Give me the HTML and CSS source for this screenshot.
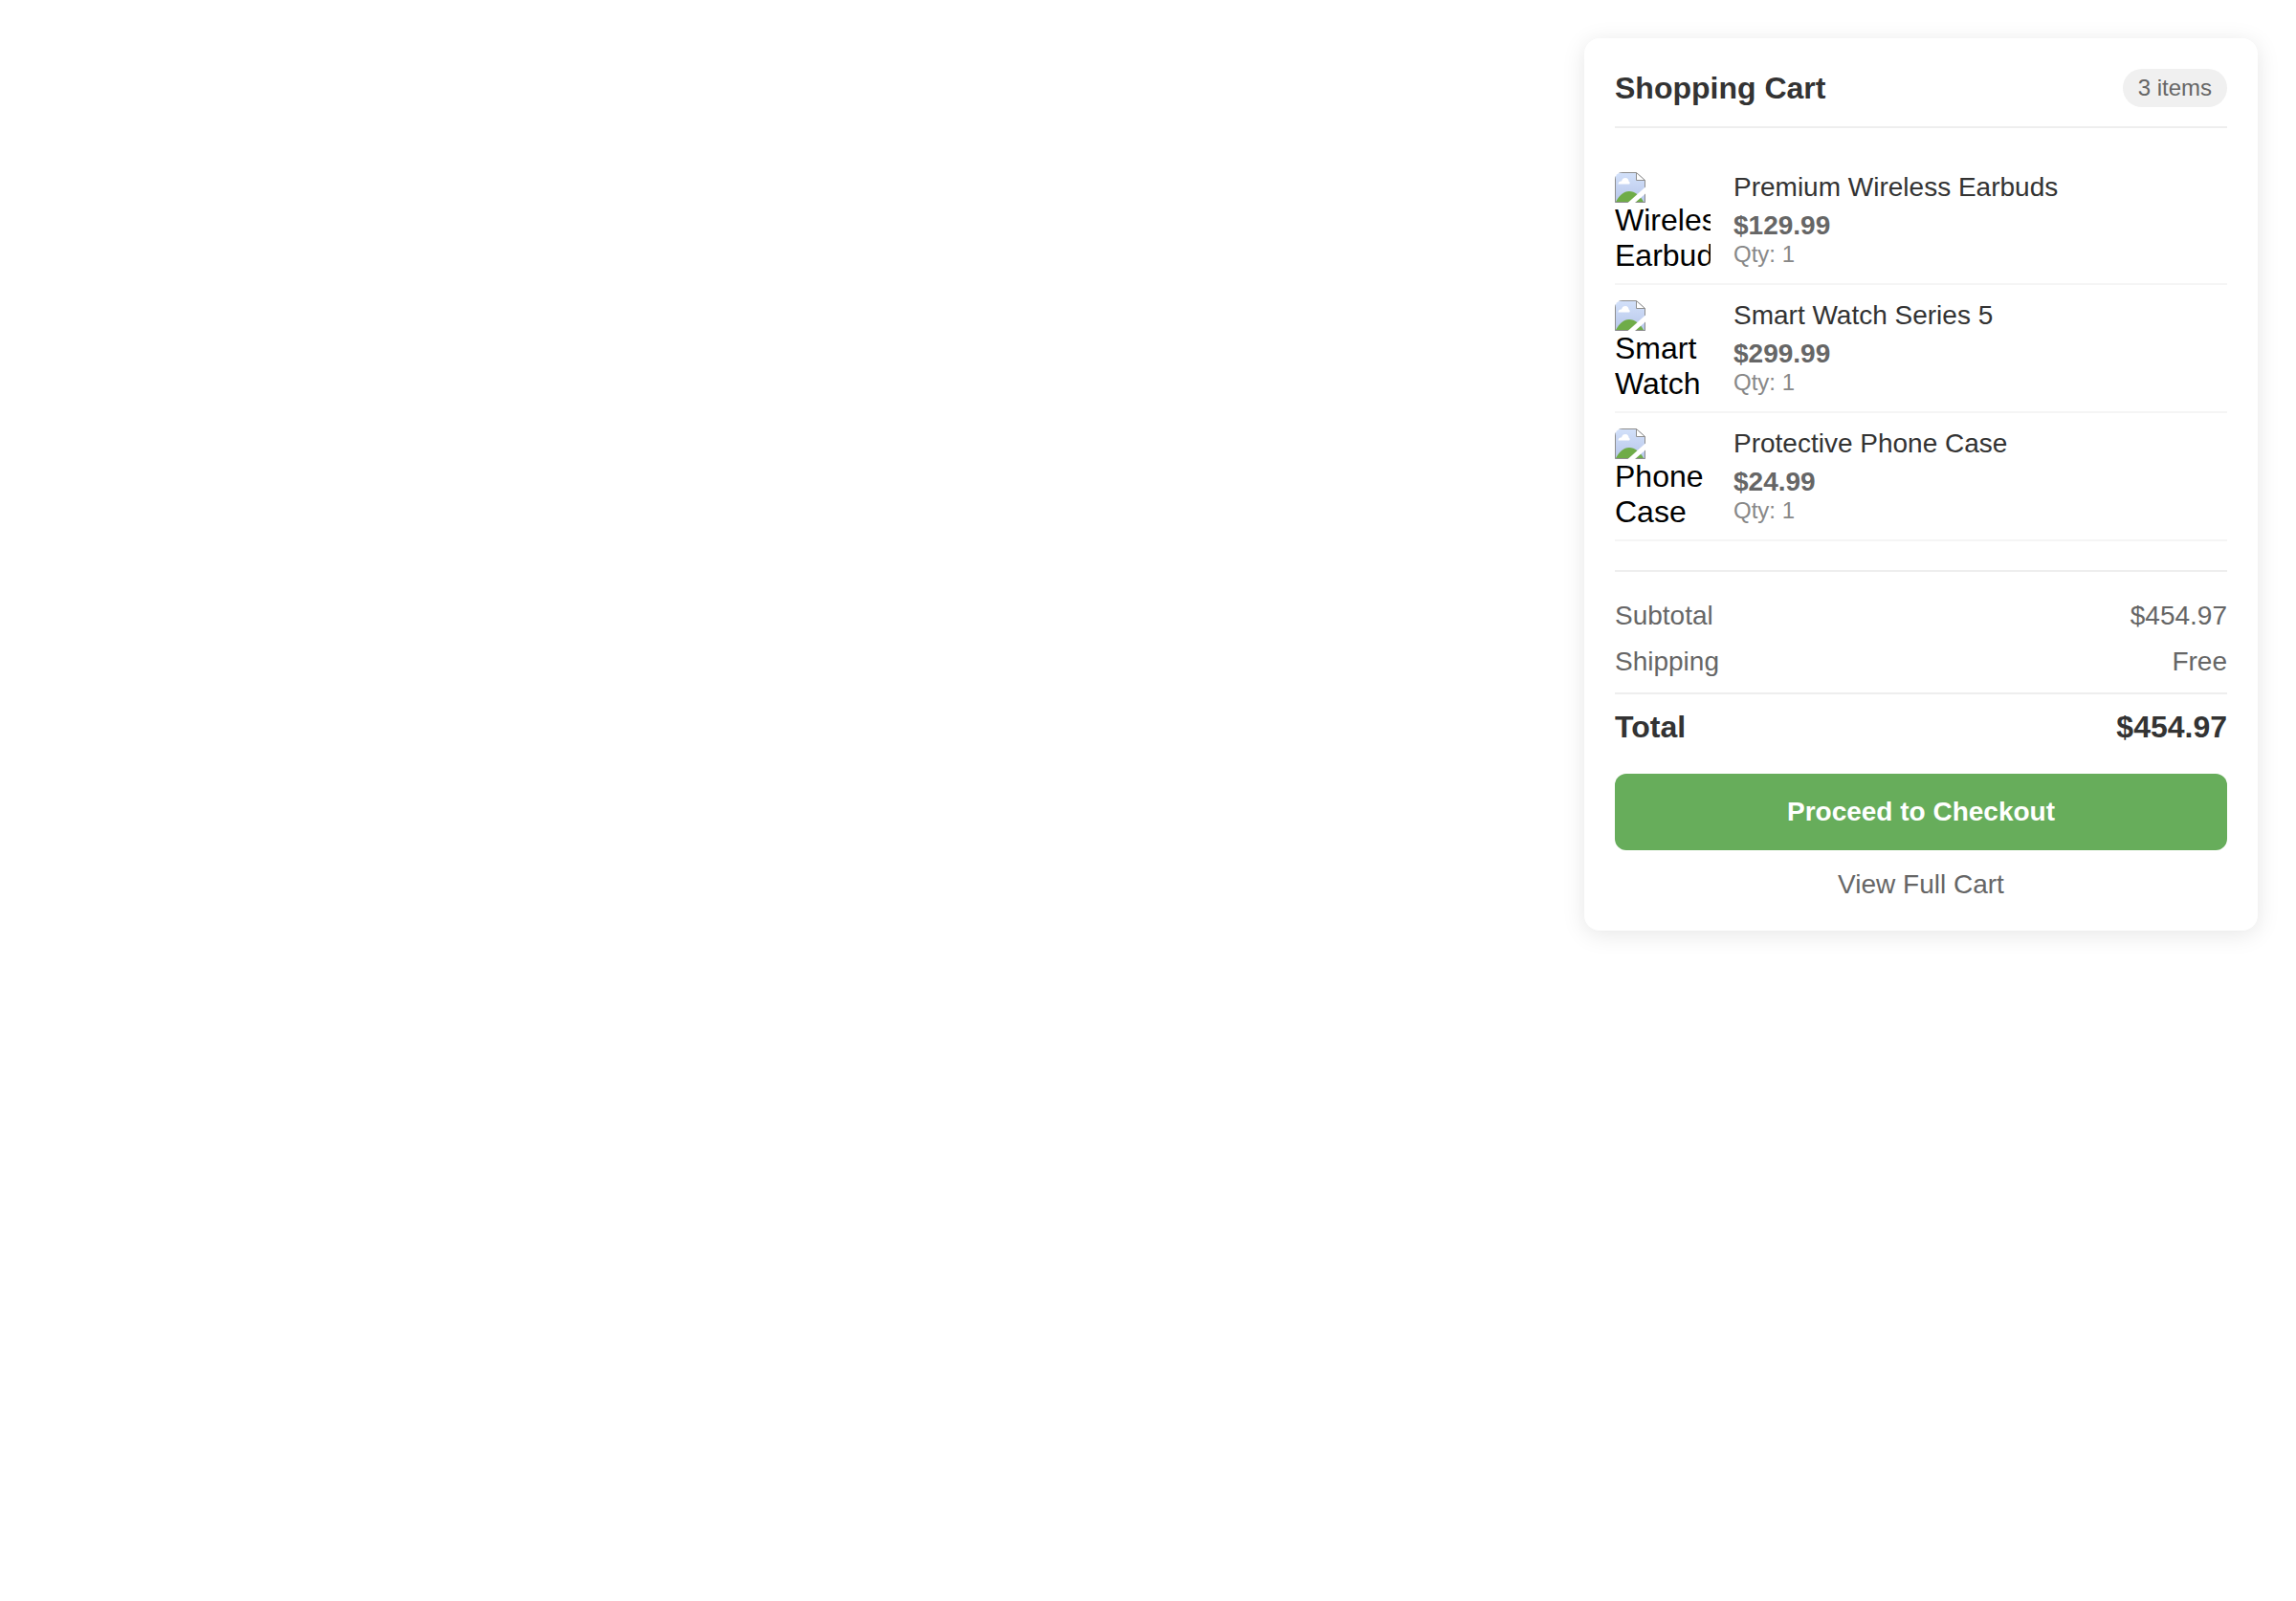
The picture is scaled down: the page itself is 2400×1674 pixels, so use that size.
FILE: index.html
```html
<!DOCTYPE html>
<html lang="en">
<head>
<meta charset="utf-8">
<meta name="viewport" content="width=device-width, initial-scale=1">
<title>Shopping Cart</title>
<link rel="stylesheet" href="styles.css">
</head>
<body>
<svg class="sprite" aria-hidden="true">
  <defs>
    <linearGradient id="sky" x1="0" y1="0" x2="0" y2="1">
      <stop offset="0" stop-color="#d3e1fa"/>
      <stop offset="1" stop-color="#b7c6ea"/>
    </linearGradient>
    <symbol id="missing-image" viewBox="0 0 32 32">
      <path d="M0 0H22L32 9V32H0Z" fill="url(#sky)"/>
      <path d="M3.500 12.500C3.500 10 5.500 9.500 7 9.500C7.500 7 9 6 11 6C13.500 6 14.500 8 14.500 9.500C16 10 16 12.500 15 12.500Z" fill="#fff"/>
      <path d="M1 31C5 24 9 20 15 20C21 20 26 24 30 31Z" fill="#6fac48"/>
      <path d="M.500 0V31.500H31.500V8.500L22 .500H0" fill="none" stroke="#8e8e8e"/>
      <path d="M22.500 .500V8.500H31.500Z" fill="#fff" stroke="#8e8e8e"/>
      <path d="M13.500 32H21L32 22.500V15.500Z" fill="#fff"/>
    </symbol>
  </defs>
</svg>
<aside class="cart" aria-labelledby="cart-title">
  <header class="cart-header">
    <h2 class="cart-title" id="cart-title">Shopping Cart</h2>
    <span class="cart-count">3 items</span>
  </header>
  <ul class="cart-items">
    <li class="cart-item">
      <div class="item-image"><svg class="item-icon" aria-hidden="true"><use href="#missing-image"/></svg>Wireless Earbuds</div>
      <div class="item-details">
        <h3 class="item-name">Premium Wireless Earbuds</h3>
        <p class="item-price">$129.99</p>
        <p class="item-quantity">Qty: 1</p>
      </div>
    </li>
    <li class="cart-item">
      <div class="item-image"><svg class="item-icon" aria-hidden="true"><use href="#missing-image"/></svg>Smart Watch</div>
      <div class="item-details">
        <h3 class="item-name">Smart Watch Series 5</h3>
        <p class="item-price">$299.99</p>
        <p class="item-quantity">Qty: 1</p>
      </div>
    </li>
    <li class="cart-item">
      <div class="item-image"><svg class="item-icon" aria-hidden="true"><use href="#missing-image"/></svg>Phone Case</div>
      <div class="item-details">
        <h3 class="item-name">Protective Phone Case</h3>
        <p class="item-price">$24.99</p>
        <p class="item-quantity">Qty: 1</p>
      </div>
    </li>
  </ul>
  <dl class="cart-summary">
    <div class="summary-row"><dt>Subtotal</dt><dd>$454.97</dd></div>
    <div class="summary-row"><dt>Shipping</dt><dd>Free</dd></div>
    <div class="summary-row total"><dt>Total</dt><dd>$454.97</dd></div>
  </dl>
  <button class="checkout-button" type="button">Proceed to Checkout</button>
  <a class="view-cart" href="#cart">View Full Cart</a>
</aside>
</body>
</html>
```

FILE: styles.css
```css
* {
  box-sizing: border-box;
  margin: 0;
  padding: 0;
}

body {
  padding: 40px;
  background: #fff;
  color: #333;
  font: 28px/32px "Liberation Sans", Arial, sans-serif;
}

.sprite {
  position: absolute;
  width: 0;
  height: 0;
}

.cart {
  max-width: 704px;
  margin-left: auto;
  padding: 32px;
  border-radius: 16px;
  background: #fff;
  box-shadow: 0 4px 24px rgba(0, 0, 0, 0.1);
}

.cart-header {
  display: flex;
  align-items: center;
  justify-content: space-between;
  margin-bottom: 30px;
  padding-bottom: 20px;
  border-bottom: 2px solid #eee;
}

.cart-title {
  font-size: 32px;
  line-height: 37px;
}

.cart-count {
  padding: 6px 16px;
  border-radius: 20px;
  background: #f0f0f0;
  color: #666;
  font-size: 24px;
  line-height: 28px;
}

.cart-items {
  list-style: none;
}

.cart-item {
  display: flex;
  gap: 24px;
  padding: 16px 0;
  border-bottom: 2px solid #f5f5f5;
}

.item-image {
  flex: none;
  width: 100px;
  height: 100px;
  overflow: hidden;
  border-radius: 8px;
  color: #000;
  font-size: 32px;
  line-height: 37px;
}

.item-icon {
  display: block;
  width: 32px;
  height: 32px;
}

.item-details {
  flex: 1;
}

.item-name {
  margin-bottom: 8px;
  font-size: 28px;
  font-weight: 400;
}

.item-price {
  color: #666;
  font-weight: 700;
}

.item-quantity {
  color: #888;
  font-size: 24px;
  line-height: 28px;
}

.cart-summary {
  display: grid;
  gap: 16px;
  margin: 30px 0;
  padding-top: 30px;
  border-top: 2px solid #eee;
}

.summary-row {
  display: flex;
  justify-content: space-between;
  color: #666;
}

.total {
  padding-top: 16px;
  border-top: 2px solid #eee;
  color: #333;
  font-size: 32px;
  font-weight: 700;
  line-height: 37px;
}

.checkout-button {
  display: block;
  width: 100%;
  padding: 24px;
  border: 0;
  border-radius: 12px;
  background: #67ad5b;
  color: #fff;
  font: inherit;
  font-weight: 700;
  cursor: pointer;
}

.view-cart {
  display: block;
  margin-top: 20px;
  color: #666;
  text-align: center;
  text-decoration: none;
}
```
